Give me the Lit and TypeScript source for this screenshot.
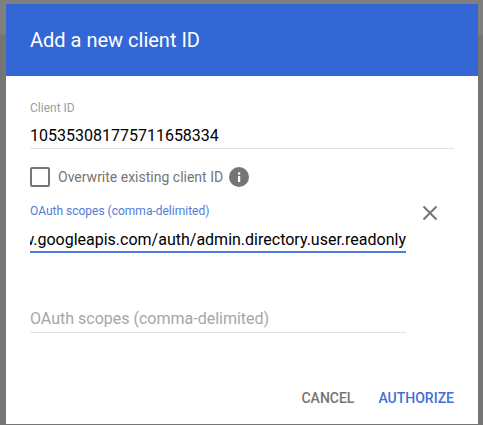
import { LitElement, html, css } from "lit";
import { customElement } from "lit/decorators.js";

@customElement("app-root")
export class AppRoot extends LitElement {
  static styles = css`
    :host {
      display: block;
      width: 483px;
      height: 425px;
      box-sizing: border-box;
      padding: 4px 5px 1px 6px;
      background: linear-gradient(#7f7f7f 0, #7f7f7f 34px, #757575 35px, #757575 100%);
      font-family: Roboto, "Liberation Sans", sans-serif;
      overflow: hidden;
    }
    .dialog {
      height: 420px;
      background: #fff;
      display: flex;
      flex-direction: column;
    }
    .header {
      height: 72px;
      flex: none;
      background: #3367d6;
      color: #fff;
      font-size: 20px;
      line-height: 72px;
      padding-left: 24px;
    }
    .body {
      flex: 1;
      padding: 25px 24px 0 24px;
      display: flex;
      flex-direction: column;
    }
    .label {
      font-size: 12px;
      line-height: 14px;
      color: #9e9e9e;
    }
    .value {
      font-size: 16px;
      line-height: 22px;
      color: #000;
      margin-top: 10px;
      padding-bottom: 1px;
      border-bottom: 1px solid #e0e0e0;
    }
    .check-row {
      display: flex;
      align-items: center;
      margin-top: 17px;
      height: 22px;
    }
    .box {
      width: 16px;
      height: 16px;
      border: 2px solid #757575;
      border-radius: 2px;
      flex: none;
    }
    .check-label {
      margin-left: 8px;
      font-size: 14px;
      color: #757575;
    }
    .info {
      margin-left: 6px;
      width: 20px;
      height: 20px;
      flex: none;
      display: block;
    }
    .scope-row {
      display: flex;
      margin-top: 16px;
    }
    .scope {
      width: 376px;
      flex: none;
    }
    .scope .label {
      color: #4f7cd8;
    }
    .scroller {
      display: flex;
      justify-content: flex-end;
      overflow: hidden;
      white-space: nowrap;
      font-size: 16px;
      line-height: 22px;
      color: #000;
      margin-top: 11px;
      height: 22px;
    }
    .focus-line {
      height: 2px;
      background: #4d7cd9;
    }
    .close {
      margin-left: 15px;
      width: 18px;
      height: 18px;
      flex: none;
      display: block;
    }
    .empty {
      width: 376px;
      margin-top: 55px;
      font-size: 16px;
      line-height: 22px;
      color: #a6a6a6;
      padding-bottom: 2px;
      border-bottom: 1px solid #e0e0e0;
    }
    .actions {
      margin-top: auto;
      display: flex;
      justify-content: flex-end;
      gap: 24px;
      padding-bottom: 18px;
      font-size: 14px;
      font-weight: 500;
      line-height: 16px;
      color: #757575;
    }
    .primary {
      color: #3f6fd8;
    }
  `;

  render() {
    return html`
      <div class="dialog">
        <div class="header">Add a new client ID</div>
        <div class="body">
          <div class="label">Client ID</div>
          <div class="value">105353081775711658334</div>
          <div class="check-row">
            <div class="box"></div>
            <span class="check-label">Overwrite existing client ID</span>
            <svg class="info" viewBox="0 0 20 20">
              <circle cx="10" cy="10" r="10" fill="#757575"></circle>
              <rect x="9" y="9" width="2.2" height="6" fill="#fff"></rect>
              <rect x="9" y="5.4" width="2.2" height="2.2" fill="#fff"></rect>
            </svg>
          </div>
          <div class="scope-row">
            <div class="scope">
              <div class="label">OAuth scopes (comma-delimited)</div>
              <div class="scroller"><span>https://www.googleapis.com/auth/admin.directory.user.readonly</span></div>
              <div class="focus-line"></div>
            </div>
            <svg class="close" viewBox="0 0 18 18">
              <path d="M2.5 2.5 L15.5 15.5 M15.5 2.5 L2.5 15.5" stroke="#757575" stroke-width="2" fill="none"></path>
            </svg>
          </div>
          <div class="empty">OAuth scopes (comma-delimited)</div>
          <div class="actions">
            <span>CANCEL</span>
            <span class="primary">AUTHORIZE</span>
          </div>
        </div>
      </div>
    `;
  }
}
